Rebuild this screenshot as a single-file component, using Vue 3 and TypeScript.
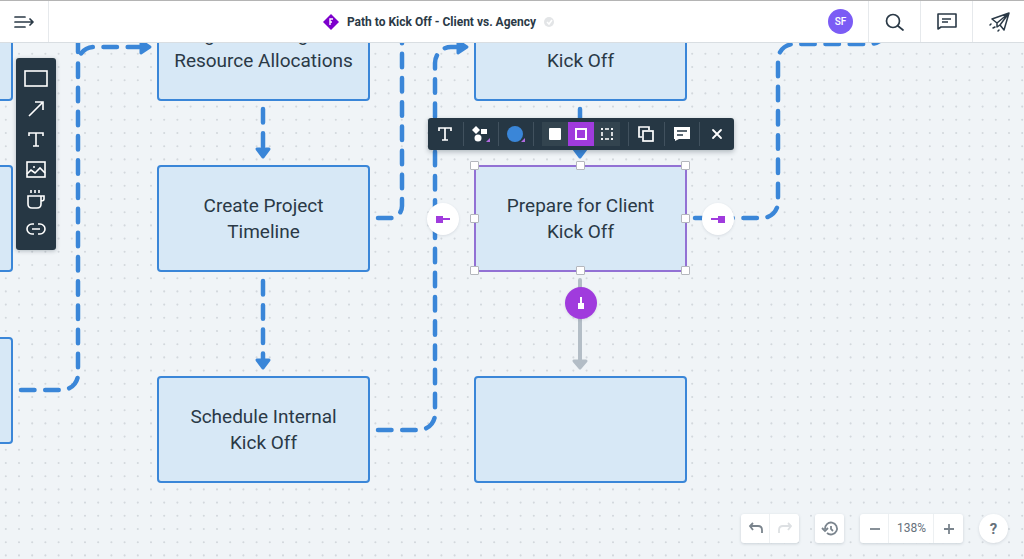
<script setup lang="ts">
import { ref } from 'vue'

interface Step {
  id: string
  x: number
  y: number
  lines: string[]
}

const NODE_WIDTH = 213
const NODE_HEIGHT = 107

const steps: Step[] = [
  { id: 'left-top', x: -200, y: -6, lines: [] },
  { id: 'left-middle', x: -200, y: 165, lines: [] },
  { id: 'left-bottom', x: -200, y: 337, lines: [] },
  { id: 'allocations', x: 157, y: -6, lines: ['Begin Planning and', 'Resource Allocations'] },
  { id: 'timeline', x: 157, y: 165, lines: ['Create Project', 'Timeline'] },
  { id: 'internal', x: 157, y: 376, lines: ['Schedule Internal', 'Kick Off'] },
  { id: 'kickoff', x: 474, y: -6, lines: ['Internal', 'Kick Off'] },
  { id: 'prepare', x: 474, y: 165, lines: ['Prepare for Client', 'Kick Off'] },
  { id: 'empty', x: 474, y: 376, lines: [] },
]

const selectedId = ref('prepare')
const outline = ref('solid')
const zoom = ref(138)

const dashed: string[] = [
  'M21 390H62A16 16 0 0 0 78 374V63A16 16 0 0 1 94 47H142',
  'M78 52V30',
  'M378 218H390A12 12 0 0 0 402 206V30',
  'M378 430H419A16 16 0 0 0 435 414V63A16 16 0 0 1 451 47H458',
  'M695 218H762A16 16 0 0 0 778 202V60A16 16 0 0 1 794 44H870A16 16 0 0 0 886 28',
  'M263 109V150',
  'M263 281V360',
  'M580 109V150',
]

const arrows: string[] = [
  'M141 41L150 47L141 53Z',
  'M458 41L467 47L458 53Z',
  'M257 149H269L263 157Z',
  'M257 360H269L263 368Z',
  'M574 149H586L580 157Z',
]

const handles = [
  [0, 0], [50, 0], [100, 0],
  [0, 50], [100, 50],
  [0, 100], [50, 100], [100, 100],
]

function place(step: Step) {
  return {
    left: `${step.x}px`,
    top: `${step.y}px`,
    width: `${NODE_WIDTH}px`,
    height: `${NODE_HEIGHT}px`,
  }
}
</script>

<template>
  <div class="app">
    <main class="board" aria-label="Flowchart">
      <svg class="wires" aria-hidden="true">
        <defs>
          <pattern id="grid" x="-14" y="-32" width="132" height="132" patternUnits="userSpaceOnUse" viewBox="0 0 100 100">
            <template v-for="row in 10" :key="row">
              <circle v-for="col in 10" :key="col" :cx="col * 10 - 5" :cy="row * 10 - 5" r="0.8" />
            </template>
          </pattern>
        </defs>
        <rect width="100%" height="100%" fill="url(#grid)" />
        <path v-for="d in dashed" :key="d" class="dash" :d="d" />
        <path v-for="d in arrows" :key="d" class="arrow" :d="d" />
        <path class="pending" d="M580 280V361" />
        <path class="pending-arrow" d="M574 361H586L580 368Z" />
      </svg>

      <div
        v-for="step in steps"
        :key="step.id"
        class="node"
        :class="{ selected: step.id === selectedId }"
        :style="place(step)"
        @click="selectedId = step.id"
      >
        <span v-for="line in step.lines" :key="line">{{ line }}</span>
        <div v-if="step.id === selectedId" class="selection">
          <i v-for="h in handles" :key="h.join()" class="handle" :style="{ left: h[0] + '%', top: h[1] + '%' }"></i>
          <button class="port west" aria-label="Add step to the left">
            <svg width="16" height="8"><path d="M6 4H15" /><rect x="1" y="1" width="7" height="7" /></svg>
          </button>
          <button class="port east" aria-label="Add step to the right">
            <svg width="16" height="8"><path d="M1 4H10" /><rect x="8" y="1" width="7" height="7" /></svg>
          </button>
          <button class="port south" aria-label="Add step below">
            <svg width="8" height="16"><path d="M4 2V10" /><rect x="1" y="8" width="6" height="6" /></svg>
          </button>

          <div class="context" role="toolbar" aria-label="Shape options">
            <button class="tool" aria-label="Text">
              <svg width="16" height="16"><path d="M2 5V2H14V5M8 2V14M5 14H11" fill="none" stroke="#fff" stroke-width="1.7" /></svg>
            </button>
            <button class="tool" aria-label="Shape">
              <svg width="20" height="18">
                <path d="M5 1L9 5L5 9L1 5Z" fill="#fff" />
                <rect x="10" y="4" width="6" height="5" fill="#fff" />
                <circle cx="7" cy="13" r="3.5" fill="#fff" />
                <path d="M19 13V17H15Z" fill="#b26be0" />
              </svg>
            </button>
            <button class="tool" aria-label="Fill color">
              <svg width="22" height="18">
                <circle cx="10" cy="9" r="8" fill="#3a86d8" />
                <path d="M20 13V17H16Z" fill="#b26be0" />
              </svg>
            </button>
            <div class="styles">
              <button :class="{ on: outline === 'none' }" aria-label="Filled" @click="outline = 'none'">
                <svg width="14" height="14"><rect x="1" y="1" width="12" height="12" rx="1" fill="#fff" /></svg>
              </button>
              <button :class="{ on: outline === 'solid' }" aria-label="Solid outline" @click="outline = 'solid'">
                <svg width="14" height="14"><rect x="2" y="2" width="10" height="10" fill="none" stroke="#fff" stroke-width="2" /></svg>
              </button>
              <button :class="{ on: outline === 'dashed' }" aria-label="Dashed outline" @click="outline = 'dashed'">
                <svg width="14" height="14"><path d="M1 2H3M5 2H9M11 2H13M1 12H3M5 12H9M11 12H13M2 1V3M2 5V9M2 11V13M12 1V3M12 5V9M12 11V13" fill="none" stroke="#fff" stroke-width="1.6" /></svg>
              </button>
            </div>
            <button class="tool" aria-label="Duplicate">
              <svg width="16" height="16" fill="none" stroke="#fff" stroke-width="1.7"><path d="M4 11H1V1H11V4" /><rect x="5" y="5" width="10" height="10" /></svg>
            </button>
            <button class="tool" aria-label="Comment">
              <svg width="18" height="16"><path d="M1 1H17V13H6L2 15V13H1Z" fill="#fff" /><path d="M4 5H14M4 9H10" stroke="#263744" stroke-width="1.6" /></svg>
            </button>
            <button class="tool" aria-label="Close">
              <svg width="12" height="12"><path d="M2 2L10 10M10 2L2 10" stroke="#fff" stroke-width="1.8" stroke-linecap="round" /></svg>
            </button>
          </div>
        </div>
      </div>
    </main>

    <header class="bar">
      <button class="menu" aria-label="Open menu">
        <svg width="20" height="14" fill="none" stroke="#2a3946" stroke-width="1.7" stroke-linecap="round" stroke-linejoin="round">
          <path d="M1 2H11M1 7H18M1 12H11M16 4L19 7L16 10" />
        </svg>
      </button>
      <div class="title">
        <svg width="16" height="16" viewBox="0 0 16 16">
          <path d="M8 0L16 8L8 16L0 8Z" fill="#7d00cc" />
          <path d="M7 11V5H10M7 8H9" fill="none" stroke="#fff" stroke-width="1.4" />
        </svg>
        <h1>Path to Kick Off - Client vs. Agency</h1>
        <svg width="10" height="10"><circle cx="5" cy="5" r="5" fill="#e3e5e7" /><path d="M3 5L5 7L8 3" fill="none" stroke="#fff" stroke-width="1.5" /></svg>
      </div>
      <button class="avatar" aria-label="Account SF">SF</button>
      <button class="action" aria-label="Search">
        <svg width="20" height="20" fill="none" stroke="#2a3946" stroke-width="1.7" stroke-linecap="round"><circle cx="8" cy="9" r="6.5" /><path d="M13 14L18 18" /></svg>
      </button>
      <button class="action" aria-label="Comments">
        <svg width="20" height="18" fill="none" stroke="#2a3946" stroke-width="1.6" stroke-linejoin="round"><path d="M1 1V16L4 14H19V1Z" /><path d="M5 6H14M5 9H11" /></svg>
      </button>
      <button class="action" aria-label="Share">
        <svg width="22" height="22" fill="none" stroke="#2a3946" stroke-width="1.5" stroke-linejoin="round" stroke-linecap="round">
          <path d="M21 2L4 8L9 12L21 2L16 19L12 14L21 2M9 12V16L12 14" />
          <path d="M3 13L2 14M7 16L5 17M11 19L10 20" />
        </svg>
      </button>
    </header>

    <nav class="palette" aria-label="Shapes">
      <button aria-label="Rectangle">
        <svg width="24" height="18"><rect x="1" y="1" width="22" height="15" /></svg>
      </button>
      <button aria-label="Line">
        <svg width="18" height="18"><path d="M2 16L15 3M8 2H16V10" /></svg>
      </button>
      <button aria-label="Text">
        <svg width="16" height="16"><path d="M1 5V2H15V5M8 2V15M5 15H11" /></svg>
      </button>
      <button aria-label="Image">
        <svg width="20" height="18"><rect x="1" y="2" width="18" height="15" /><path d="M1 14L5 10L9 13L14 8L19 13" /><circle cx="8" cy="7" r="1" class="dot" /></svg>
      </button>
      <button aria-label="Icons">
        <svg width="20" height="22"><path d="M2 8H15V16Q15 20 11 20H6Q2 20 2 16ZM15 8H18V11Q18 13 15 13M5 2V5M9 2V5M13 2V5" /></svg>
      </button>
      <button aria-label="Link">
        <svg width="20" height="12"><path d="M8 1H6A5 5 0 0 0 6 11H8M12 1H14A5 5 0 0 1 14 11H12M6 6H14" /></svg>
      </button>
    </nav>

    <footer class="controls">
      <div class="group">
        <button aria-label="Undo">
          <svg width="16" height="14" stroke="#7a848d"><path d="M5 1L2 4L5 8M2 4H10Q14 4 14 8V11" /></svg>
        </button>
        <button aria-label="Redo" disabled>
          <svg width="16" height="14" stroke="#dde0e3"><path d="M11 1L14 4L11 8M14 4H6Q2 4 2 8V11" /></svg>
        </button>
      </div>
      <div class="group">
        <button aria-label="Version history">
          <svg width="18" height="16" stroke="#7a848d"><path d="M4 8A6 6 0 1 1 6 12M1 7L4 10L7 7M10 5V8L12 10" /></svg>
        </button>
      </div>
      <div class="group">
        <button aria-label="Zoom out" @click="zoom -= 1">
          <svg width="12" height="12" stroke="#7a848d"><path d="M1 6H11" /></svg>
        </button>
        <output class="level" aria-label="Zoom level">{{ zoom }}%</output>
        <button aria-label="Zoom in" @click="zoom += 1">
          <svg width="12" height="12" stroke="#7a848d"><path d="M1 6H11M6 1V11" /></svg>
        </button>
      </div>
      <button class="help" aria-label="Help">?</button>
    </footer>
  </div>
</template>

<style>
body {
  margin: 0;
}
</style>

<style scoped>
.app {
  display: grid;
  grid-template: minmax(0, 1fr) / minmax(0, 1fr);
  height: 100vh;
  overflow: hidden;
  background: #f0f4f7;
  color: #2a3946;
  font-family: Roboto, 'Liberation Sans', sans-serif;
}
.app > * {
  grid-area: 1 / 1;
}
button {
  display: flex;
  align-items: center;
  justify-content: center;
  margin: 0;
  padding: 0;
  border: 0;
  background: none;
  color: inherit;
  font: inherit;
}

.board {
  position: relative;
  overflow: hidden;
}
.wires {
  display: block;
  width: 100%;
  height: 100%;
}
.wires circle {
  fill: #d3d8dd;
}
.dash {
  fill: none;
  stroke: #3a86d8;
  stroke-width: 4.5;
  stroke-linecap: round;
  stroke-dasharray: 13.5 10.7;
}
.arrow {
  fill: #3a86d8;
  stroke: #3a86d8;
  stroke-width: 3;
  stroke-linejoin: round;
}
.pending {
  stroke: #b3bdc6;
  stroke-width: 4;
  stroke-linecap: round;
}
.pending-arrow {
  fill: #b3bdc6;
  stroke: #b3bdc6;
  stroke-width: 3;
  stroke-linejoin: round;
}
.node {
  position: absolute;
  box-sizing: border-box;
  display: flex;
  flex-direction: column;
  align-items: center;
  justify-content: center;
  border: 2px solid #3a86d8;
  border-radius: 4px;
  background: #d7e8f6;
  font-size: 19px;
  line-height: 26px;
  white-space: nowrap;
}
.node.selected {
  border-color: #9271d4;
  border-radius: 1px;
}
.selection {
  position: absolute;
  inset: -1px;
}
.handle {
  position: absolute;
  box-sizing: border-box;
  width: 9px;
  height: 9px;
  margin: -5px 0 0 -5px;
  border: 1px solid #b4b7bd;
  border-radius: 1px;
  background: #fff;
}
.port {
  position: absolute;
  width: 32px;
  height: 32px;
  margin: -16px 0 0 -16px;
  border-radius: 50%;
  background: #fff;
  box-shadow: 0 1px 3px rgba(40, 60, 80, 0.12);
}
.port svg {
  fill: #a03bdd;
  stroke: #a03bdd;
  stroke-width: 2;
}
.port rect {
  stroke: none;
}
.port.west {
  left: -32px;
  top: 50%;
}
.port.east {
  left: calc(100% + 32px);
  top: 50%;
}
.port.south {
  left: 50%;
  top: calc(100% + 32px);
  background: #a03bdd;
}
.port.south svg {
  fill: #fff;
  stroke: #fff;
}

.context {
  position: absolute;
  left: 50%;
  bottom: calc(100% + 16px);
  display: flex;
  align-items: center;
  height: 32px;
  border-radius: 3px;
  background: #263744;
  box-shadow: 0 2px 5px rgba(30, 45, 60, 0.3);
  transform: translateX(-50%);
}
.tool {
  width: 35px;
  height: 24px;
}
.tool + .tool {
  border-left: 1px solid #41515e;
}
.styles {
  display: flex;
  padding: 0 8px;
  border: solid #41515e;
  border-width: 0 1px;
}
.styles button {
  width: 26px;
  height: 24px;
  background: #33444f;
}
.styles .on {
  background: #a03bdd;
}

.bar {
  display: flex;
  align-items: stretch;
  align-self: start;
  z-index: 1;
  box-sizing: border-box;
  height: 43px;
  border-top: 1px solid #b4b4b4;
  border-bottom: 1px solid #d9dee2;
  background: #fff;
}
.menu {
  width: 49px;
  border-right: 1px solid #e6e9ec;
}
.title {
  display: flex;
  flex: 1;
  align-items: center;
  justify-content: center;
  gap: 8px;
}
h1 {
  margin: 0;
  font-size: 12px;
  font-weight: 700;
  white-space: nowrap;
}
.avatar {
  align-self: center;
  width: 25px;
  height: 25px;
  margin-right: 15px;
  border-radius: 50%;
  background: #7b5cf5;
  color: #fff;
  font-size: 10px;
  font-weight: 500;
}
.action {
  width: 52px;
  border-left: 1px solid #e6e9ec;
}

.palette {
  display: flex;
  flex-direction: column;
  align-self: start;
  justify-self: start;
  z-index: 1;
  margin: 58px 0 0 16px;
  padding: 6px 0;
  width: 40px;
  border-radius: 3px;
  background: #263744;
  box-shadow: 0 1px 4px rgba(30, 45, 60, 0.3);
}
.palette button {
  height: 30px;
}
.palette svg {
  fill: none;
  stroke: #fff;
  stroke-width: 1.6;
}
.palette .dot {
  fill: #fff;
  stroke: none;
}

.controls {
  display: flex;
  gap: 16px;
  align-self: end;
  justify-self: end;
  z-index: 1;
  margin: 16px;
  color: #66717b;
}
.group {
  display: flex;
  border-radius: 3px;
  background: #fff;
  box-shadow: 0 1px 3px rgba(40, 60, 80, 0.18);
}
.group > * {
  width: 29px;
  height: 29px;
}
.group > * + * {
  box-shadow: -1px 0 #edf0f2;
}
.group svg {
  fill: none;
  stroke-width: 1.8;
}
.group .level {
  width: 45px;
  font-size: 12px;
  line-height: 29px;
  text-align: center;
}
.help {
  width: 29px;
  height: 29px;
  border-radius: 50%;
  background: #fff;
  box-shadow: 0 1px 3px rgba(40, 60, 80, 0.14);
  font-size: 15px;
  font-weight: 700;
}
</style>
